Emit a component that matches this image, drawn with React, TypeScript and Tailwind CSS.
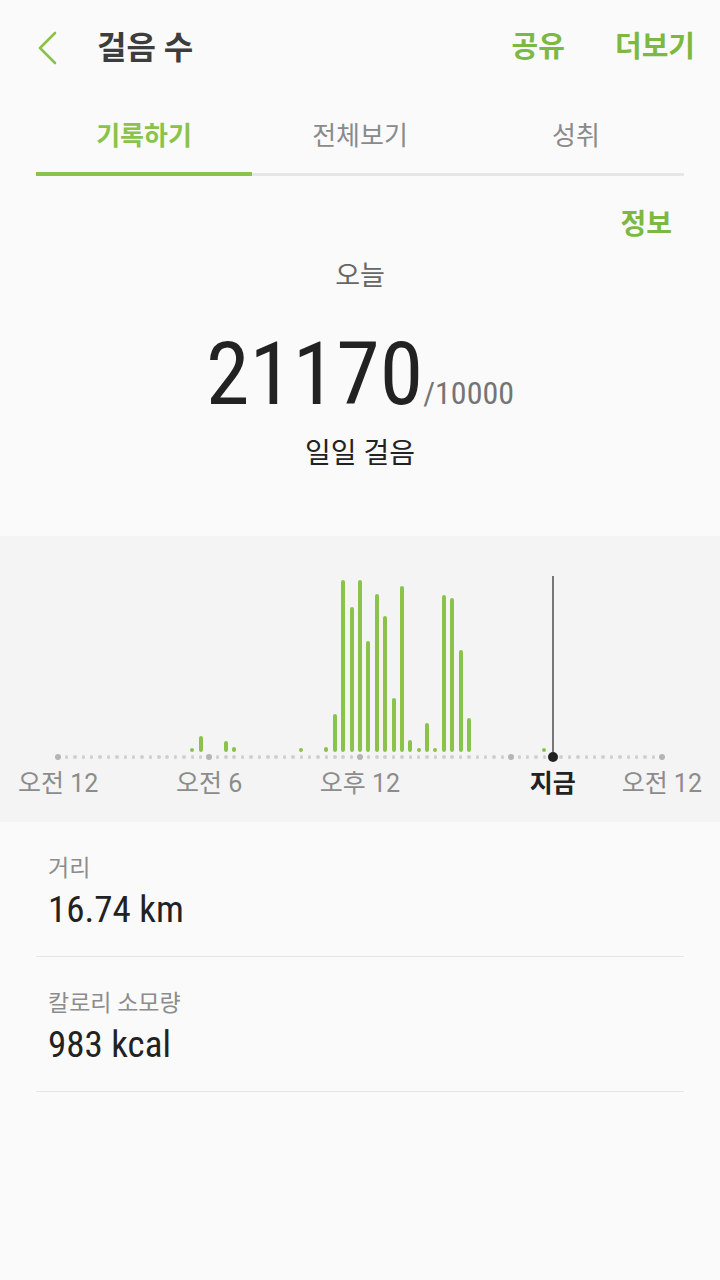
const font = 'font-["Roboto","Noto_Sans_CJK_KR",sans-serif]';

// step count per 20-minute slot (bar height in px), slot 0 = 오전 12
const bars: Record<number, number> = {
  16: 4, 17: 16, 20: 11, 21: 5, 29: 4, 32: 5, 33: 38, 34: 172, 35: 145, 36: 172,
  37: 111, 38: 158, 39: 136, 40: 54, 41: 166, 42: 12, 43: 4, 44: 29, 45: 4,
  46: 157, 47: 154, 48: 102, 49: 34, 58: 4,
};
const NOW = 59;

const labels = [
  { col: 'col-start-[1]', text: '오전 12' },
  { col: 'col-start-[19]', text: '오전 6' },
  { col: 'col-start-[37]', text: '오후 12' },
  { col: 'col-start-[60]', text: '지금', now: true },
  { col: 'col-start-[73]', text: '오전 12' },
];

function Chart() {
  const slots = Array.from({ length: 73 }, (_, i) => i);
  return (
    <div className="h-[286px] bg-[#f4f4f4] pt-[40px]">
      <div className="ml-[54px] w-[612px] grid grid-cols-[repeat(73,minmax(0,1fr))]">
        {slots.map((i) => (
          <div key={i} className="flex flex-col items-center">
            <div className="h-[176px] w-full flex items-end justify-center">
              {i === NOW ? (
                <div className="w-[1.5px] h-full bg-[#777]" />
              ) : bars[i] ? (
                <div className="w-[4px] rounded-full bg-[#8bc34a]" style={{ height: bars[i] }} />
              ) : null}
            </div>
            <div className="h-[10px] flex items-center justify-center">
              {i === NOW ? (
                <div className="w-[10px] h-[10px] rounded-full bg-[#222]" />
              ) : i % 18 === 0 ? (
                <div className="w-[6px] h-[6px] rounded-full bg-[#b4b4b4]" />
              ) : (
                <div className="w-[3.5px] h-[3.5px] rounded-full bg-[#cfcfcf]" />
              )}
            </div>
          </div>
        ))}
        {labels.map((l) => (
          <div key={l.col} className={`${l.col} row-start-2 mt-[6px] flex justify-center`}>
            <span
              className={`whitespace-nowrap text-[25px] leading-[32px] ${
                l.now ? 'font-bold text-[#222]' : 'text-[#8c8c8c]'
              }`}
            >
              {l.text}
            </span>
          </div>
        ))}
      </div>
    </div>
  );
}

function StatRow({ label, value }: { label: string; value: string }) {
  return (
    <div className="mx-[36px] border-b border-[#e6e6e6] pl-[12px] pt-[32px] pb-[26px]">
      <div className="text-[23px] leading-[30px] text-[#8c8c8c]">{label}</div>
      <div className="mt-[6px] text-[37px] leading-[40px] text-[#222] [font-stretch:86%]">{value}</div>
    </div>
  );
}

export default function App() {
  const tabs = ['기록하기', '전체보기', '성취'];
  return (
    <div className={`w-[720px] h-[1280px] bg-[#fafafa] ${font}`}>
      {/* app bar */}
      <div className="h-[96px] flex items-center">
        <svg className="ml-[36px] w-[22px] h-[34px]" viewBox="0 0 22 34" fill="none">
          <polyline points="19,2 4,17 19,32" stroke="#8bc34a" strokeWidth="2.6" strokeLinecap="round" strokeLinejoin="round" />
        </svg>
        <div className="ml-[39px] text-[32px] font-bold text-[#3d3d3d]">걸음 수</div>
        <div className="ml-auto mr-[25px] flex gap-[50px] text-[29px] font-bold text-[#7db843]">
          <span>공유</span>
          <span>더보기</span>
        </div>
      </div>

      {/* tabs */}
      <div className="mx-[36px] flex">
        {tabs.map((t, i) => (
          <div key={t} className="flex-1 flex flex-col">
            <div
              className={`h-[76px] pt-[4px] flex items-center justify-center text-[26px] ${
                i === 0 ? 'font-bold text-[#8bc34a]' : 'text-[#8a8a8a]'
              }`}
            >
              {t}
            </div>
            <div className="h-[4px] flex items-end">
              <div className={i === 0 ? 'w-full h-[4px] bg-[#8bc34a]' : 'w-full h-[3px] bg-[#e6e6e6]'} />
            </div>
          </div>
        ))}
      </div>

      {/* today summary */}
      <div className="mt-[31px] pr-[48px] flex justify-end">
        <span className="text-[28px] leading-[36px] font-bold text-[#7db843]">정보</span>
      </div>
      <div className="mt-[15px] text-center text-[27px] leading-[36px] text-[#666]">오늘</div>
      <div className="mt-[32px] text-center text-[88px] leading-[96px] text-[#222]">
        <span className="[font-stretch:80%]">21170</span>
        <span className="text-[32px] leading-none text-[#757575] [font-stretch:85%]">/10000</span>
      </div>
      <div className="mt-[14px] text-center text-[28px] leading-[36px] text-[#222]">일일 걸음</div>

      <div className="mt-[64px]">
        <Chart />
      </div>

      <StatRow label="거리" value="16.74 km" />
      <StatRow label="칼로리 소모량" value="983 kcal" />
    </div>
  );
}
